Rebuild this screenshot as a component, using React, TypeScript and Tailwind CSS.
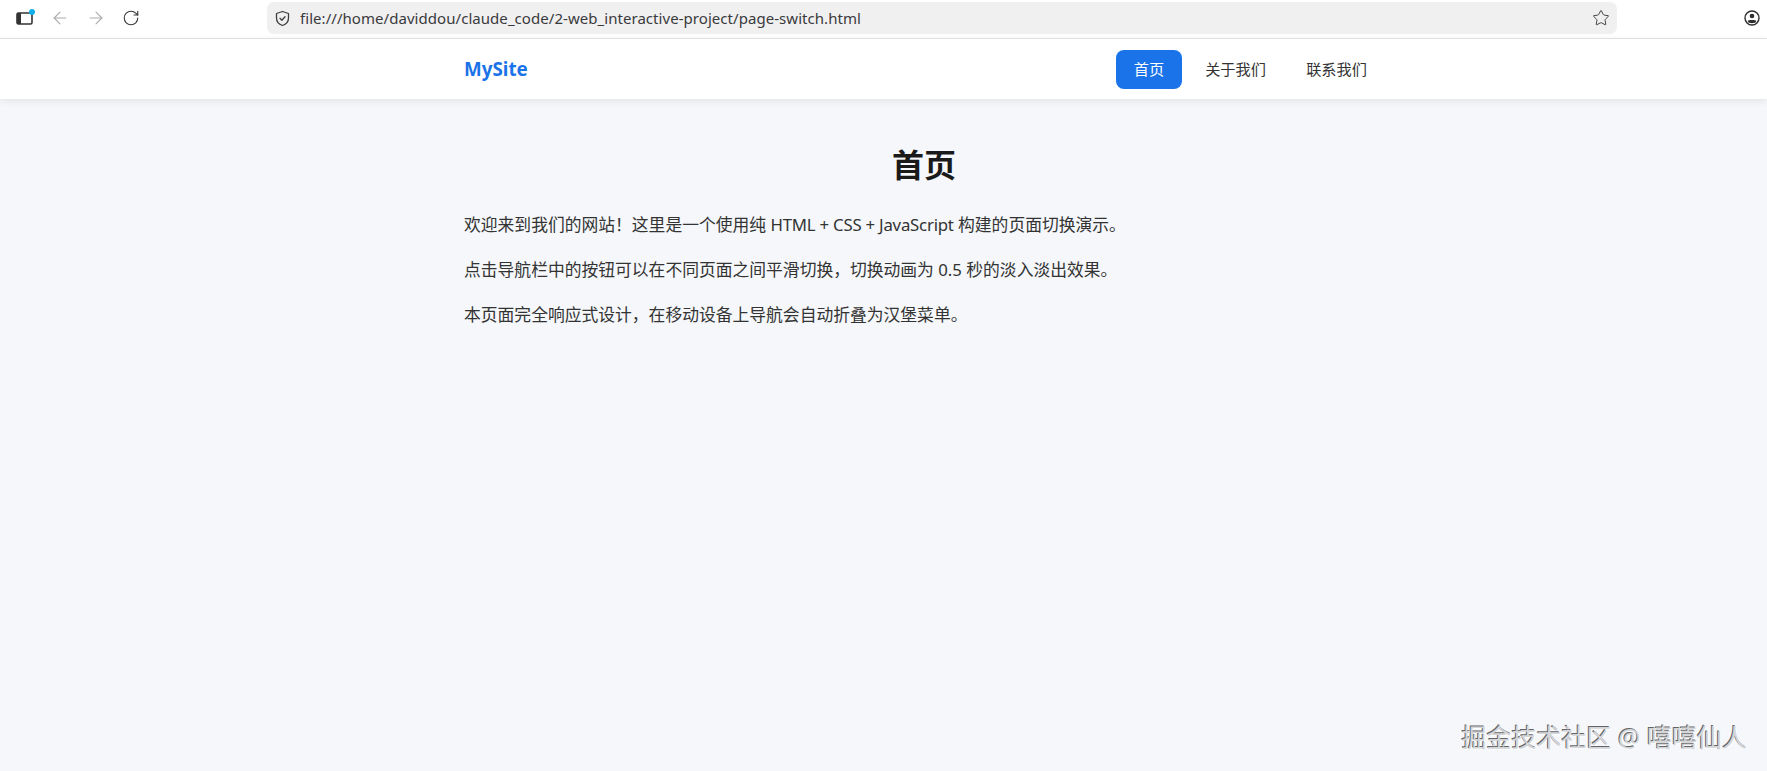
import { ArrowLeft, ArrowRight, RotateCw, Star } from 'lucide-react';

const cjk = "font-['Noto_Sans','Noto_Sans_CJK_SC',sans-serif]";

function Toolbar() {
    return (
        <div className="h-[39px] pb-[2px] bg-white border-b border-[#e4e4e6] flex items-center text-[#3a3a3c]">
            {/* Sidebar button with the blue dot */}
            <div className="ml-[16px] w-[18px] h-[20px] relative shrink-0">
                <svg width="18" height="20" viewBox="0 0 18 20" fill="none">
                    <rect x="1" y="5" width="15" height="11" rx="1.5" stroke="#333" strokeWidth="1.6" />
                    <rect x="1" y="5" width="4" height="11" fill="#333" />
                </svg>
                <span className="absolute right-[-1px] top-[1px] w-[6px] h-[6px] rounded-full bg-[#12b0e8]" />
            </div>
            <ArrowLeft className="ml-[16px] w-[20px] h-[20px] text-[#ababad]" strokeWidth={1.3} />
            <ArrowRight className="ml-[16px] w-[20px] h-[20px] text-[#ababad]" strokeWidth={1.3} />
            <RotateCw className="ml-[16px] w-[18px] h-[18px] text-[#3a3a3c]" strokeWidth={1.5} />
            {/* Address bar */}
            <div className="ml-[127px] w-[1350px] h-[32px] rounded-[7px] bg-[#f0f0f1] flex items-center pl-[7px] pr-[7px]">
                <svg width="17" height="17" viewBox="0 0 17 17" fill="none" stroke="#3f3f41" strokeWidth="1.3" strokeLinejoin="round" strokeLinecap="round">
                    <path d="M8.5 1.5 L14.5 3.5 V8 C14.5 11.5 12 14.3 8.5 15.5 C5 14.3 2.5 11.5 2.5 8 V3.5 Z" />
                    <path d="M6 8.3 L7.9 10.2 L11 6.8" />
                </svg>
                <span className="ml-[9px] text-[15px] tracking-[0.05px] text-[#3a3a3c] font-['Noto_Sans',sans-serif]">file:///home/daviddou/claude_code/2-web_interactive-project/page-switch.html</span>
                <Star className="ml-auto w-[18px] h-[18px] text-[#3f3f41]" strokeWidth={1.3} />
            </div>
            {/* Profile */}
            <svg className="ml-[127px]" width="16" height="16" viewBox="0 0 16 16" fill="none">
                <circle cx="8" cy="8" r="7" stroke="#2e2e30" strokeWidth="1.4" />
                <circle cx="8" cy="6" r="2.3" fill="#2e2e30" />
                <path d="M3.6 11 C4.5 9.6 11.5 9.6 12.4 11 L11.5 12.6 C10 13.4 6 13.4 4.5 12.6 Z" fill="#2e2e30" />
            </svg>
        </div>
    );
}

function Nav() {
    return (
        <div className="h-[60px] bg-white shadow-[0_2px_8px_rgba(0,0,0,0.08)] relative pl-[464px] flex items-center">
            <div className={`w-[921px] flex items-center justify-between ${cjk}`}>
                <div className="text-[18.8px] font-bold text-[#1a73e8]">MySite</div>
                <div className="flex items-center text-[15.2px]">
                    <span className="w-[66px] h-[39px] rounded-[8px] bg-[#1a73e8] text-white flex items-center justify-center">首页</span>
                    <span className="ml-[5px] w-[97px] h-[39px] flex items-center justify-center text-[#333]">关于我们</span>
                    <span className="ml-[4px] w-[97px] h-[39px] flex items-center justify-center text-[#333]">联系我们</span>
                </div>
            </div>
        </div>
    );
}

export default function App() {
    return (
        <div className="w-[1767px] h-[771px] overflow-hidden bg-[#f5f7fa] relative">
            <Toolbar />
            <Nav />
            <main className={`ml-[464px] w-[920px] pt-[46px] text-[#333] ${cjk}`}>
                <h1 className="text-[32px] leading-[40px] font-bold text-center text-[#1a1a1a]">首页</h1>
                <p className="mt-[26px] text-[16.8px] leading-[28px]">欢迎来到我们的网站！这里是一个使用纯 <span className="tracking-[-0.22px]">HTML + CSS + JavaScript</span> 构建的页面切换演示。</p>
                <p className="mt-[17px] text-[16.8px] leading-[28px]">点击导航栏中的按钮可以在不同页面之间平滑切换，切换动画为 0.5 秒的淡入淡出效果。</p>
                <p className="mt-[17px] text-[16.8px] leading-[28px]">本页面完全响应式设计，在移动设备上导航会自动折叠为汉堡菜单。</p>
            </main>
            {/* Watermark */}
            <div className={`absolute right-[20px] bottom-[19px] text-[25px] leading-[30px] text-[#d4d5d8] [text-shadow:-1px_-1px_0_rgba(60,60,60,0.8),1px_1px_1px_rgba(255,255,255,0.8)] ${cjk}`}>掘金技术社区 @ 嘻嘻仙人</div>
        </div>
    );
}
